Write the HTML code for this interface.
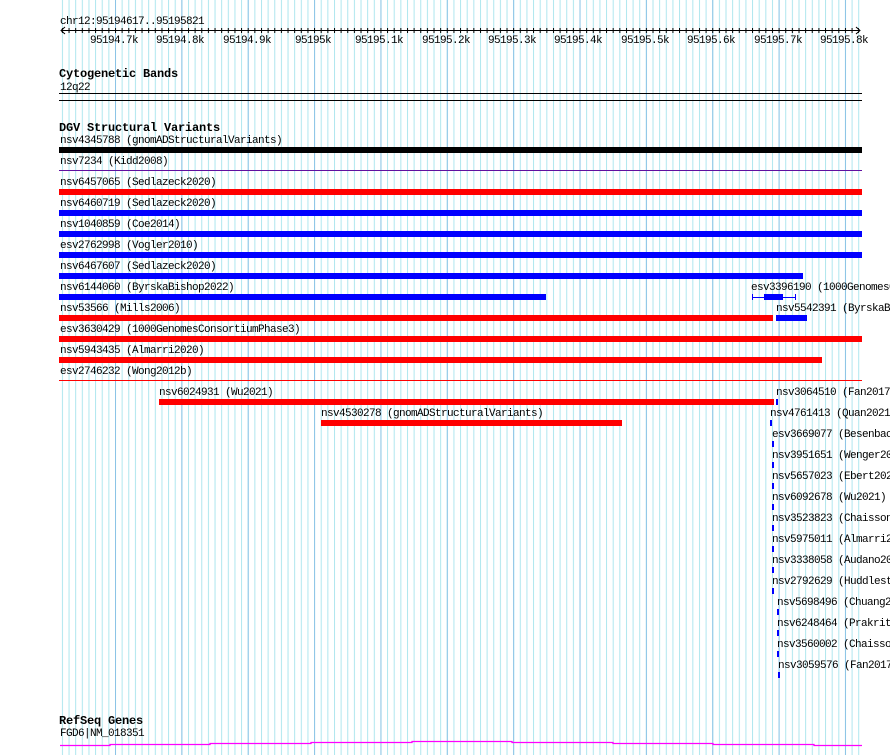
<!DOCTYPE html>
<html style="overflow:hidden"><head><meta charset="utf-8"><style>
html,body{overflow:hidden}
body{margin:0;width:890px;height:755px;background:#fff;position:relative;overflow:hidden;font-family:"Liberation Mono",monospace;font-size:11px;letter-spacing:-0.6px;color:#000}
.t{position:absolute;line-height:12px;white-space:nowrap}
.h{position:absolute;font-weight:bold;font-size:12px;letter-spacing:-0.2px;line-height:13px;white-space:nowrap}
.b{position:absolute}
svg{position:absolute;left:0;top:0}
</style></head><body>
<svg width="890" height="755">
<defs>
<pattern id="mn" patternUnits="userSpaceOnUse" x="115" y="0" width="6.636" height="755"><rect x="0" y="0" width="1" height="755" fill="#aee6ee"/></pattern>
<pattern id="mj" patternUnits="userSpaceOnUse" x="115" y="0" width="66.36" height="755"><rect x="0" y="0" width="1" height="755" fill="#8cc4e6"/></pattern>
<pattern id="tk" patternUnits="userSpaceOnUse" x="61.9" y="0" width="6.636" height="10"><rect x="0" y="0" width="1" height="10" fill="#000"/></pattern>
</defs>
<rect x="61" y="0" width="800" height="755" fill="url(#mn)"/>
<rect x="115" y="0" width="750" height="755" fill="url(#mj)"/>
<rect x="61" y="28" width="798" height="5" fill="url(#tk)"/>
<rect x="61" y="30" width="799" height="1" fill="#000"/>
<path d="M65 27 L61 30.5 L65 34 M856 27 L860 30.5 L856 34" stroke="#000" fill="none"/>
<path d="M60 745.5 H110 V744.5 H210 V743.5 H311 V742.5 H412 V741.5 H512 V742.5 H613 V743.5 H713 V744.5 H814 V745.5 H862" stroke="#f0f" fill="none" stroke-width="1.3"/>
<path d="M752.5 294 V300 M795.5 294 V300 M752 297.5 H796" stroke="#00f" fill="none"/>
</svg>
<div class="t" style="left:60px;top:16px">chr12:95194617..95195821</div>
<div class="t" style="left:90px;top:35px">95194.7k</div>
<div class="t" style="left:156px;top:35px">95194.8k</div>
<div class="t" style="left:223px;top:35px">95194.9k</div>
<div class="t" style="left:295px;top:35px">95195k</div>
<div class="t" style="left:355px;top:35px">95195.1k</div>
<div class="t" style="left:422px;top:35px">95195.2k</div>
<div class="t" style="left:488px;top:35px">95195.3k</div>
<div class="t" style="left:554px;top:35px">95195.4k</div>
<div class="t" style="left:621px;top:35px">95195.5k</div>
<div class="t" style="left:687px;top:35px">95195.6k</div>
<div class="t" style="left:754px;top:35px">95195.7k</div>
<div class="t" style="left:820px;top:35px">95195.8k</div>

<div class="h" style="left:59px;top:68px">Cytogenetic Bands</div>
<div class="t" style="left:60px;top:82px">12q22</div>
<div class="b" style="left:59px;top:93px;width:803px;height:1px;background:#000"></div>
<div class="b" style="left:59px;top:100px;width:803px;height:1px;background:#000"></div>

<div class="h" style="left:59px;top:122px">DGV Structural Variants</div>
<div class="t" style="left:60px;top:135px">nsv4345788 (gnomADStructuralVariants)</div>
<div class="b" style="left:59px;top:147px;width:803px;height:6px;background:#000"></div>
<div class="t" style="left:60px;top:156px">nsv7234 (Kidd2008)</div>
<div class="b" style="left:59px;top:170px;width:803px;height:1px;background:#6010a0"></div>
<div class="t" style="left:60px;top:177px">nsv6457065 (Sedlazeck2020)</div>
<div class="b" style="left:59px;top:189px;width:803px;height:6px;background:#f00"></div>
<div class="t" style="left:60px;top:198px">nsv6460719 (Sedlazeck2020)</div>
<div class="b" style="left:59px;top:210px;width:803px;height:6px;background:#00f"></div>
<div class="t" style="left:60px;top:219px">nsv1040859 (Coe2014)</div>
<div class="b" style="left:59px;top:231px;width:803px;height:6px;background:#00f"></div>
<div class="t" style="left:60px;top:240px">esv2762998 (Vogler2010)</div>
<div class="b" style="left:59px;top:252px;width:803px;height:6px;background:#00f"></div>
<div class="t" style="left:60px;top:261px">nsv6467607 (Sedlazeck2020)</div>
<div class="b" style="left:59px;top:273px;width:744px;height:6px;background:#00f"></div>
<div class="t" style="left:60px;top:282px">nsv6144060 (ByrskaBishop2022)</div>
<div class="b" style="left:59px;top:294px;width:487px;height:6px;background:#00f"></div>
<div class="t" style="left:751px;top:282px">esv3396190 (1000GenomesCon</div>
<div class="b" style="left:764px;top:294px;width:19px;height:6px;background:#00f"></div>
<div class="t" style="left:60px;top:303px">nsv53566 (Mills2006)</div>
<div class="b" style="left:59px;top:315px;width:714px;height:6px;background:#f00"></div>
<div class="t" style="left:776px;top:303px">nsv5542391 (ByrskaB</div>
<div class="b" style="left:776px;top:315px;width:31px;height:6px;background:#00f"></div>
<div class="t" style="left:60px;top:324px">esv3630429 (1000GenomesConsortiumPhase3)</div>
<div class="b" style="left:59px;top:336px;width:803px;height:6px;background:#f00"></div>
<div class="t" style="left:60px;top:345px">nsv5943435 (Almarri2020)</div>
<div class="b" style="left:59px;top:357px;width:763px;height:6px;background:#f00"></div>
<div class="t" style="left:60px;top:366px">esv2746232 (Wong2012b)</div>
<div class="b" style="left:59px;top:380px;width:803px;height:1px;background:#f00"></div>
<div class="t" style="left:159px;top:387px">nsv6024931 (Wu2021)</div>
<div class="b" style="left:159px;top:399px;width:615px;height:6px;background:#f00"></div>
<div class="t" style="left:776px;top:387px">nsv3064510 (Fan2017</div>
<div class="b" style="left:776px;top:399px;width:2px;height:6px;background:#00f"></div>
<div class="t" style="left:321px;top:408px">nsv4530278 (gnomADStructuralVariants)</div>
<div class="b" style="left:321px;top:420px;width:301px;height:6px;background:#f00"></div>
<div class="t" style="left:770px;top:408px">nsv4761413 (Quan2021</div>
<div class="b" style="left:770px;top:420px;width:2px;height:6px;background:#00f"></div>

<div class="t" style="left:772px;top:429px">esv3669077 (Besenbac</div>
<div class="b" style="left:772px;top:441px;width:2px;height:6px;background:#00f"></div>
<div class="t" style="left:772px;top:450px">nsv3951651 (Wenger20</div>
<div class="b" style="left:772px;top:462px;width:2px;height:6px;background:#00f"></div>
<div class="t" style="left:772px;top:471px">nsv5657023 (Ebert202</div>
<div class="b" style="left:772px;top:483px;width:2px;height:6px;background:#00f"></div>
<div class="t" style="left:772px;top:492px">nsv6092678 (Wu2021)</div>
<div class="b" style="left:772px;top:504px;width:2px;height:6px;background:#00f"></div>
<div class="t" style="left:772px;top:513px">nsv3523823 (Chaisson</div>
<div class="b" style="left:772px;top:525px;width:2px;height:6px;background:#00f"></div>
<div class="t" style="left:772px;top:534px">nsv5975011 (Almarri2</div>
<div class="b" style="left:772px;top:546px;width:2px;height:6px;background:#00f"></div>
<div class="t" style="left:772px;top:555px">nsv3338058 (Audano20</div>
<div class="b" style="left:772px;top:567px;width:2px;height:6px;background:#00f"></div>
<div class="t" style="left:772px;top:576px">nsv2792629 (Huddlest</div>
<div class="b" style="left:772px;top:588px;width:2px;height:6px;background:#00f"></div>
<div class="t" style="left:777px;top:597px">nsv5698496 (Chuang2</div>
<div class="b" style="left:777px;top:609px;width:2px;height:6px;background:#00f"></div>
<div class="t" style="left:777px;top:618px">nsv6248464 (Prakrit</div>
<div class="b" style="left:777px;top:630px;width:2px;height:6px;background:#00f"></div>
<div class="t" style="left:777px;top:639px">nsv3560002 (Chaisso</div>
<div class="b" style="left:777px;top:651px;width:2px;height:6px;background:#00f"></div>
<div class="t" style="left:778px;top:660px">nsv3059576 (Fan2017</div>
<div class="b" style="left:778px;top:672px;width:2px;height:6px;background:#00f"></div>

<div class="h" style="left:59px;top:715px">RefSeq Genes</div>
<div class="t" style="left:60px;top:728px">FGD6|NM_018351</div>
</body></html>
